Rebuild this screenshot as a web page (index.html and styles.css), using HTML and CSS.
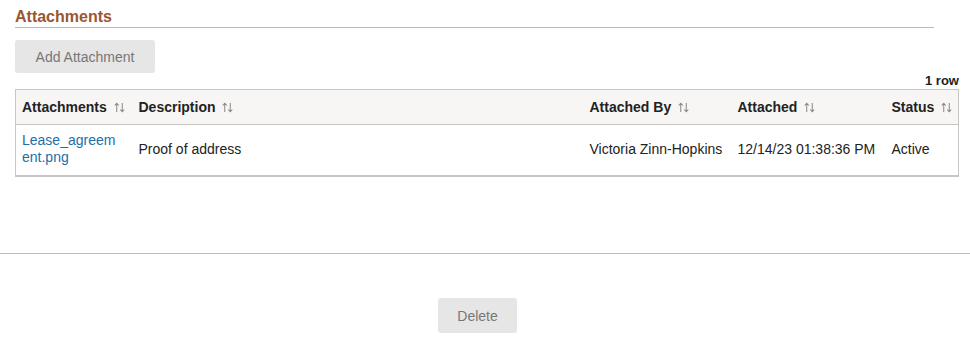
FILE: index.html
```html
<!DOCTYPE html>
<html lang="en">
<head>
    <meta charset="UTF-8">
    <title>Attachments</title>
    <link rel="stylesheet" href="styles.css">
</head>
<body>
    <div class="page">
        <section class="attachments">
            <h2 class="section-title">Attachments</h2>
            <button class="btn btn-add" disabled>Add Attachment</button>
            <div class="row-count">1 row</div>
            <table class="grid">
                <colgroup>
                    <col class="c-file">
                    <col class="c-desc">
                    <col class="c-by">
                    <col class="c-date">
                    <col class="c-status">
                </colgroup>
                <thead>
                    <tr>
                        <th>Attachments <svg class="sort" viewBox="0 0 12 12"><path d="M3 11V1.5M0.8 3.8L3 1.3L5.2 3.8M9 1v9.5M6.8 8.2L9 10.7L11.2 8.2"/></svg></th>
                        <th>Description <svg class="sort" viewBox="0 0 12 12"><path d="M3 11V1.5M0.8 3.8L3 1.3L5.2 3.8M9 1v9.5M6.8 8.2L9 10.7L11.2 8.2"/></svg></th>
                        <th>Attached By <svg class="sort" viewBox="0 0 12 12"><path d="M3 11V1.5M0.8 3.8L3 1.3L5.2 3.8M9 1v9.5M6.8 8.2L9 10.7L11.2 8.2"/></svg></th>
                        <th>Attached <svg class="sort" viewBox="0 0 12 12"><path d="M3 11V1.5M0.8 3.8L3 1.3L5.2 3.8M9 1v9.5M6.8 8.2L9 10.7L11.2 8.2"/></svg></th>
                        <th>Status <svg class="sort" viewBox="0 0 12 12"><path d="M3 11V1.5M0.8 3.8L3 1.3L5.2 3.8M9 1v9.5M6.8 8.2L9 10.7L11.2 8.2"/></svg></th>
                    </tr>
                </thead>
                <tbody>
                    <tr>
                        <td><a href="#" class="file-link">Lease_agreem<br>ent.png</a></td>
                        <td>Proof of address</td>
                        <td>Victoria Zinn-Hopkins</td>
                        <td>12/14/23 01:38:36 PM</td>
                        <td>Active</td>
                    </tr>
                </tbody>
            </table>
        </section>
        <div class="footer">
            <button class="btn btn-delete" disabled>Delete</button>
        </div>
    </div>
</body>
</html>
```

FILE: styles.css
```css
body {
    margin: 0;
    font-family: "Liberation Sans", Arial, sans-serif;
    font-size: 14px;
    color: #222;
    background: #fff;
}
.page {
    width: 955px;
}
.attachments {
    padding: 7px 11px 0 15px;
    height: 246px;
    border-bottom: 1px solid #bbb;
    width: 944px;
}
.section-title {
    margin: 0 25px 0 0;
    font-size: 16px;
    line-height: 19px;
    font-weight: bold;
    color: #9b5631;
    border-bottom: 1px solid #bbb;
    padding-bottom: 1px;
}
.btn {
    font-family: "Liberation Sans", Arial, sans-serif;
    font-size: 14px;
    background: #e6e6e6;
    color: #777;
    border: none;
    border-radius: 3px;
}
.btn-add {
    margin-top: 12px;
    width: 140px;
    height: 33px;
}
.row-count {
    text-align: right;
    font-size: 13px;
    font-weight: bold;
    line-height: 15px;
    margin-top: 0;
    padding-bottom: 1px;
}
.grid {
    width: 944px;
    border-collapse: collapse;
    table-layout: fixed;
    border: 1px solid #c9c6c2;
    border-bottom: 2px solid #c9c6c2;
}
.c-file { width: 117px; }
.c-desc { width: 451px; }
.c-by { width: 148px; }
.c-date { width: 154px; }
.grid th {
    background: #f7f6f5;
    text-align: left;
    font-weight: bold;
    height: 34px;
    padding: 0 6px;
    border-bottom: 1px solid #c9c6c2;
    white-space: nowrap;
}
.grid td {
    padding: 7px 6px 9px 6px;
    line-height: 17px;
    vertical-align: middle;
}
.sort {
    width: 11px;
    height: 11px;
    margin-left: 3px;
    vertical-align: -1px;
    fill: none;
    stroke: #888;
    stroke-width: 1.1;
}
.file-link {
    color: #1e6ea8;
    text-decoration: none;
}
.footer {
    padding-top: 44px;
    text-align: center;
}
.btn-delete {
    width: 79px;
    height: 35px;
}
```
